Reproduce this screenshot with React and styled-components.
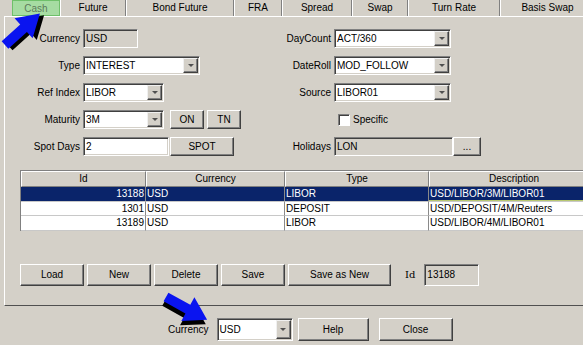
import React from "react";
import styled, { createGlobalStyle } from "styled-components";

const GlobalStyle = createGlobalStyle`
  body {
    margin: 0;
    background: #d4d0c8;
    font-family: "Liberation Sans", Arial, sans-serif;
    font-size: 10px;
    color: #000;
  }
`;

const Window = styled.div`
  position: relative;
  width: 583px;
  height: 345px;
  overflow: hidden;
  background: #d4d0c8;
  padding-left: 3px;
  box-sizing: border-box;
`;

const TabBar = styled.div`
  display: flex;
  height: 16px;
  padding-left: 9px;
`;

const Tab = styled.div`
  flex: none;
  width: ${(p) => p.$w}px;
  height: 16px;
  line-height: 15px;
  text-align: center;
  box-sizing: border-box;
  border-left: 1px solid #fff;
  border-right: 1px solid #808080;
  ${(p) =>
    p.$active &&
    `
    background: #a6dca2;
    border: 1px solid #6fc06a;
    color: #5d7a5b;
  `}
`;

const Panel = styled.div`
  border-left: 1px solid #fff;
  border-top: 1px solid #fff;
  border-bottom: 1px solid #505050;
  height: 290px;
  box-sizing: border-box;
  padding: 12px 0 0 0;
  margin-left: 1px;
`;

const Form = styled.div`
  display: grid;
  grid-template-columns: 74px 175px 70px 1fr;
  grid-auto-rows: 19px;
  column-gap: 3px;
  row-gap: 8px;
  padding-left: 1px;
`;

const Label = styled.div`
  display: flex;
  align-items: center;
  justify-content: flex-end;
  white-space: nowrap;
`;

const Inline = styled.div`
  display: flex;
  align-items: center;
`;

const Field = styled.div`
  position: relative;
  flex: none;
  width: ${(p) => p.$w}px;
  height: ${(p) => p.$h || 19}px;
  box-sizing: border-box;
  background: ${(p) => (p.$disabled ? "#d4d0c8" : "#fff")};
  border: 1px solid;
  border-color: #808080 #fff #fff #808080;
  box-shadow: inset 1px 1px #404040, inset -1px -1px #d4d0c8;
  padding-left: 2px;
  display: flex;
  align-items: center;
  white-space: nowrap;
`;

const DropButton = styled.div`
  position: absolute;
  right: 1px;
  top: 1px;
  bottom: 1px;
  width: 15px;
  box-sizing: border-box;
  background: #d4d0c8;
  border: 1px solid;
  border-color: #f0f0f0 #404040 #404040 #f0f0f0;
  box-shadow: inset -1px -1px #808080;
  display: flex;
  align-items: center;
  justify-content: center;

  &::after {
    content: "";
    border-left: 3px solid transparent;
    border-right: 3px solid transparent;
    border-top: 3px solid #505050;
  }
`;

const Button = styled.div`
  flex: none;
  width: ${(p) => p.$w}px;
  height: ${(p) => p.$h || 19}px;
  box-sizing: border-box;
  background: #d4d0c8;
  border: 1px solid;
  border-color: #fff #404040 #404040 #fff;
  box-shadow: inset -1px -1px #808080;
  display: flex;
  align-items: center;
  justify-content: center;
  margin-left: ${(p) => p.$ml || 0}px;
`;

const CheckRow = styled.div`
  display: flex;
  align-items: center;
  gap: 3px;
  padding-left: 4px;
`;

const CheckBox = styled.div`
  width: 12px;
  height: 12px;
  box-sizing: border-box;
  background: #fff;
  border: 1px solid;
  border-color: #808080 #fff #fff #808080;
  box-shadow: inset 1px 1px #404040;
`;

const Table = styled.div`
  display: grid;
  grid-template-columns: 125px 139px 144px 170px;
  margin: 14px 0 0 15px;
  border-top: 1px solid #808080;
  border-left: 1px solid #808080;
  width: 579px;
`;

const HeadCell = styled.div`
  height: 16px;
  box-sizing: border-box;
  border-top: 1px solid #fff;
  border-left: 1px solid #fff;
  border-right: 1px solid #808080;
  border-bottom: 1px solid #808080;
  text-align: center;
  line-height: 14px;
`;

const Cell = styled.div`
  height: 14.5px;
  box-sizing: border-box;
  padding: 0 1px;
  line-height: 14px;
  white-space: nowrap;
  overflow: hidden;
  text-align: ${(p) => (p.$right ? "right" : "left")};
  background: ${(p) => (p.$selected ? "#0a246a" : "#fff")};
  color: ${(p) => (p.$selected ? "#fff" : "#000")};
  border-right: 1px solid #8a8a8a;
  border-bottom: 1px solid #c8c8c8;
  ${(p) => p.$focus && "box-shadow: inset 0 -1px #b8c870;"}
`;

const ButtonRow = styled.div`
  display: flex;
  align-items: center;
  gap: 3px;
  margin: 33px 0 0 15px;
`;

const IdLabel = styled.div`
  margin: 0 6px 0 11px;
  font-family: "DejaVu Serif", "Liberation Serif", serif;
`;

const Footer = styled.div`
  display: flex;
  align-items: center;
  padding: 12px 0 0 165px;
`;

const FooterLabel = styled.div`
  margin-right: 8px;
`;

const ArrowSvg = styled.svg`
  position: absolute;
  left: ${(p) => p.$x}px;
  top: ${(p) => p.$y - 16}px;
  transform-origin: 0 16px;
  transform: rotate(${(p) => p.$angle}deg);
  overflow: visible;
`;

const arrowPoints = "0,-5 25,-5 25,-13.5 47,0 25,13.5 25,5 0,5";

const Arrow = ({ x, y, angle, dx, dy }) => (
  <ArrowSvg $x={x} $y={y} $angle={angle} width="60" height="32" viewBox="0 -16 60 32">
    <polygon points={arrowPoints} fill="#000" transform={`translate(${dx} ${dy})`} />
    <polygon points={arrowPoints} fill="#0a14f0" />
  </ArrowSvg>
);

const Select = ({ w, h, value }) => (
  <Field $w={w} $h={h}>
    {value}
    <DropButton />
  </Field>
);

const tabs = [
  ["Cash", 48],
  ["Future", 66],
  ["Bond Future", 108],
  ["FRA", 48],
  ["Spread", 70],
  ["Swap", 56],
  ["Turn Rate", 92],
  ["Basis Swap", 95],
];

const rows = [
  { id: "13188", cur: "USD", type: "LIBOR", desc: "USD/LIBOR/3M/LIBOR01", selected: true },
  { id: "1301", cur: "USD", type: "DEPOSIT", desc: "USD/DEPOSIT/4M/Reuters" },
  { id: "13189", cur: "USD", type: "LIBOR", desc: "USD/LIBOR/4M/LIBOR01" },
];

export default function App() {
  return (
    <Window>
      <GlobalStyle />
      <TabBar>
        {tabs.map(([name, w], i) => (
          <Tab key={name} $w={w} $active={i === 0}>
            {name}
          </Tab>
        ))}
      </TabBar>
      <Panel>
        <Form>
          <Label>Currency</Label>
          <Inline>
            <Field $w={55} $disabled>USD</Field>
          </Inline>
          <Label>DayCount</Label>
          <Inline>
            <Select w={117} value="ACT/360" />
          </Inline>

          <Label>Type</Label>
          <Inline>
            <Select w={117} value="INTEREST" />
          </Inline>
          <Label>DateRoll</Label>
          <Inline>
            <Select w={117} value="MOD_FOLLOW" />
          </Inline>

          <Label>Ref Index</Label>
          <Inline>
            <Select w={81} value="LIBOR" />
          </Inline>
          <Label>Source</Label>
          <Inline>
            <Select w={117} value="LIBOR01" />
          </Inline>

          <Label>Maturity</Label>
          <Inline>
            <Select w={81} value="3M" />
            <Button $w={34} $ml={6}>ON</Button>
            <Button $w={34} $ml={3}>TN</Button>
          </Inline>
          <div />
          <CheckRow>
            <CheckBox />
            Specific
          </CheckRow>

          <Label>Spot Days</Label>
          <Inline>
            <Field $w={86}>2</Field>
            <Button $w={64} $ml={1}>SPOT</Button>
          </Inline>
          <Label>Holidays</Label>
          <Inline>
            <Field $w={119} $disabled>LON</Field>
            <Button $w={28}>...</Button>
          </Inline>
        </Form>

        <Table>
          <HeadCell>Id</HeadCell>
          <HeadCell>Currency</HeadCell>
          <HeadCell>Type</HeadCell>
          <HeadCell>Description</HeadCell>
          {rows.map((r) => (
            <React.Fragment key={r.id}>
              <Cell $right $selected={r.selected}>{r.id}</Cell>
              <Cell $selected={r.selected}>{r.cur}</Cell>
              <Cell $selected={r.selected}>{r.type}</Cell>
              <Cell $selected={r.selected} $focus={r.selected}>{r.desc}</Cell>
            </React.Fragment>
          ))}
        </Table>

        <ButtonRow>
          <Button $w={64} $h={22}>Load</Button>
          <Button $w={64} $h={22}>New</Button>
          <Button $w={64} $h={22}>Delete</Button>
          <Button $w={64} $h={22}>Save</Button>
          <Button $w={103} $h={22}>Save as New</Button>
          <IdLabel>Id</IdLabel>
          <Field $w={55} $h={22} $disabled>13188</Field>
        </ButtonRow>
      </Panel>

      <Footer>
        <FooterLabel>Currency</FooterLabel>
        <Select w={76} h={23} value="USD" />
        <Button $w={71} $h={23} $ml={5}>Help</Button>
        <Button $w={74} $h={23} $ml={10}>Close</Button>
      </Footer>

      <Arrow x={5} y={45} angle={-42} dx={2} dy={4} />
      <Arrow x={166} y={297} angle={29} dx={1} dy={4.5} />
    </Window>
  );
}
